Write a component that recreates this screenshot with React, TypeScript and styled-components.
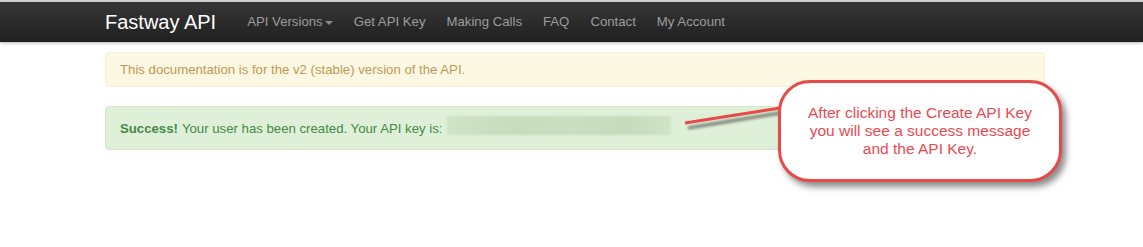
import React from "react";
import styled, { createGlobalStyle } from "styled-components";

const Global = createGlobalStyle`
  html, body { margin: 0; padding: 0; background: #ffffff; }
  body { font-family: "Liberation Sans", Arial, Helvetica, sans-serif; }
  #root { position: relative; min-height: 247px; }
`;

const Page = styled.div`
  position: relative;
  width: 1143px;
  height: 247px;
  overflow: hidden;
`;

const Navbar = styled.header`
  height: 40px;
  border-top: 2px solid #cfcfcf;
  background: linear-gradient(to bottom, #363636, #202020);
  box-shadow: 0 1px 3px rgba(0, 0, 0, 0.3);
`;

const NavInner = styled.div`
  width: 940px;
  margin-left: 105px;
  height: 40px;
  display: flex;
  align-items: center;
`;

const Brand = styled.a`
  color: #ffffff;
  font-size: 20px;
  line-height: 40px;
  margin-right: 31px;
  text-decoration: none;
`;

const NavList = styled.nav`
  display: flex;
  align-items: center;
  gap: 21px;
`;

const NavLink = styled.a`
  color: #9d9d9d;
  font-size: 13.2px;
  line-height: 40px;
  text-decoration: none;
  display: flex;
  align-items: center;
`;

const Caret = styled.span`
  display: inline-block;
  width: 0;
  height: 0;
  margin-left: 2px;
  margin-top: 2px;
  border-top: 4px solid #8a8a8a;
  border-left: 4px solid transparent;
  border-right: 4px solid transparent;
`;

const Container = styled.main`
  width: 940px;
  margin-left: 105px;
  padding-top: 10px;
  display: flex;
  flex-direction: column;
  gap: 19px;
`;

const Alert = styled.div<{ $tone: "warning" | "success" }>`
  box-sizing: border-box;
  border-radius: 4px;
  border: 1px solid ${(p) => (p.$tone === "warning" ? "#fbeed5" : "#d6e9c6")};
  background: ${(p) => (p.$tone === "warning" ? "#fcf8e3" : "#dff0d8")};
  color: ${(p) => (p.$tone === "warning" ? "#c09853" : "#468847")};
  font-size: 13.2px;
  height: ${(p) => (p.$tone === "warning" ? "35px" : "44px")};
  padding: 0 14px;
  display: flex;
  align-items: center;
`;

const Strong = styled.strong`
  font-weight: bold;
  margin-right: 4px;
`;

const BlurredKey = styled.span`
  display: inline-block;
  width: 224px;
  height: 19px;
  margin-left: 5px;
  margin-bottom: 6px;
  background: linear-gradient(
    to right,
    #cfe3c6 0%,
    #c7dcbd 30%,
    #cadfc1 55%,
    #c5dbbc 80%,
    #cfe3c7 100%
  );
  filter: blur(1px);
`;

const Pointer = styled.svg`
  position: absolute;
  left: 680px;
  top: 100px;
  overflow: visible;
`;

const Callout = styled.div`
  position: absolute;
  left: 778px;
  top: 80px;
  width: 284px;
  height: 102px;
  box-sizing: border-box;
  border: 3px solid #e84a4a;
  border-radius: 32px;
  background: #ffffff;
  box-shadow: 4px 5px 6px rgba(0, 0, 0, 0.45);
  display: flex;
  align-items: center;
  justify-content: center;
  text-align: center;
  color: #ea4a52;
  font-size: 15.5px;
  line-height: 18px;
`;

export default function App() {
  return (
    <Page>
      <Global />
      <Navbar>
        <NavInner>
          <Brand href="#">Fastway API</Brand>
          <NavList>
            <NavLink href="#">
              API Versions
              <Caret />
            </NavLink>
            <NavLink href="#">Get API Key</NavLink>
            <NavLink href="#">Making Calls</NavLink>
            <NavLink href="#">FAQ</NavLink>
            <NavLink href="#">Contact</NavLink>
            <NavLink href="#">My Account</NavLink>
          </NavList>
        </NavInner>
      </Navbar>
      <Container>
        <Alert $tone="warning">
          This documentation is for the v2 (stable) version of the API.
        </Alert>
        <Alert $tone="success">
          <Strong>Success!</Strong> Your user has been created. Your API key is:
          <BlurredKey />
        </Alert>
      </Container>
      <Pointer width="110" height="40" viewBox="0 0 110 40">
        <defs>
          <filter id="shadowBlur" x="-20%" y="-100%" width="140%" height="300%">
            <feGaussianBlur stdDeviation="1.6" />
          </filter>
        </defs>
        <line
          x1="8"
          y1="28"
          x2="100"
          y2="13"
          stroke="rgba(0,0,0,0.5)"
          strokeWidth="3"
          filter="url(#shadowBlur)"
        />
        <line x1="5" y1="23" x2="100" y2="8" stroke="#e84a4a" strokeWidth="3" />
      </Pointer>
      <Callout>
        After clicking the Create API Key
        <br />
        you will see a success message
        <br />
        and the API Key.
      </Callout>
    </Page>
  );
}
